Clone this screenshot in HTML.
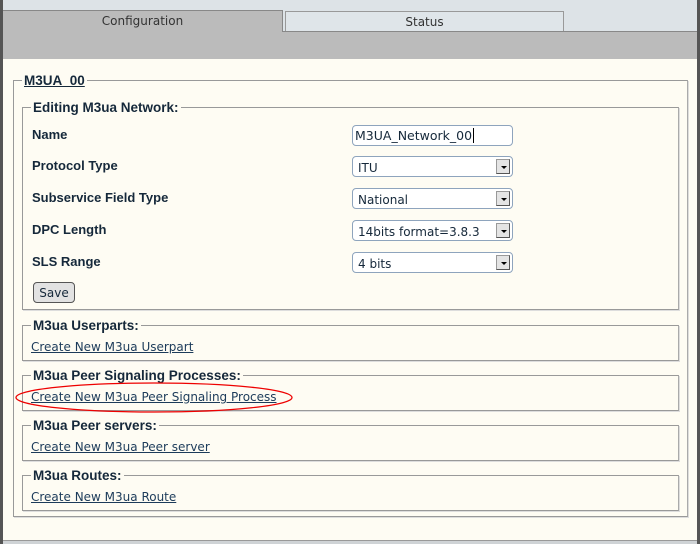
<!DOCTYPE html>
<html><head><style>
*{margin:0;padding:0;box-sizing:border-box}
body{width:700px;height:544px;background:#dde3e7;position:relative;overflow:hidden;font-family:"DejaVu Sans","Liberation Sans",sans-serif;color:#15283a}
.a{position:absolute}
.fs{position:absolute;border:1px solid #999;border-right-color:#aaa;box-shadow:1px 1px 0 #ddd}
.lg{position:absolute;background:#fefcf3;font-weight:bold;font-size:13.5px;padding:0 2px;line-height:15px;font-family:"Liberation Sans",sans-serif}
.lab{position:absolute;left:32px;font-weight:bold;font-size:13px;font-family:"Liberation Sans",sans-serif}
.sel{position:absolute;left:352px;width:161px;height:21px;border:1px solid #8ea4bd;border-radius:4px;background:#fff;font-size:12px;padding:4px 0 0 5px}
.sel i{position:absolute;right:2px;top:2px;width:14px;height:15px;background:#e4e4e4;border:1px solid #999;border-right-color:#555;border-bottom-color:#555}
.sel i:after{content:"";position:absolute;left:4px;top:6px;border-left:3px solid transparent;border-right:3px solid transparent;border-top:3px solid #000}
.lk{position:absolute;left:31px;font-size:12px;color:#1c3b5a;text-decoration:underline}
</style></head><body>
<div class="a" style="left:0;top:0;width:3px;height:544px;background:#555"></div>
<div class="a" style="left:697px;top:0;width:3px;height:544px;background:#555"></div>
<div class="a" style="left:3px;top:10px;width:280px;height:24px;background:#bbb;border-top:1px solid #888;border-right:1px solid #888;font-size:12px;text-align:center;padding-top:3px;color:#333">Configuration</div>
<div class="a" style="left:285px;top:11px;width:279px;height:21px;background:#dfe5e9;border:1px solid #999;font-size:12px;text-align:center;padding-top:3px;color:#333">Status</div>
<div class="a" style="left:283px;top:31px;width:414px;height:1px;background:#888"></div>
<div class="a" style="left:3px;top:32px;width:694px;height:27px;background:#bbb"></div>
<div class="a" style="left:3px;top:59px;width:694px;height:482px;background:#fefcf3"></div>
<div class="a" style="left:3px;top:540px;width:694px;height:4px;background:#cfd3d6;border-top:1px solid #999"></div>

<div class="fs" style="left:13px;top:80px;width:675px;height:437px"></div>
<div class="lg" style="left:22px;top:73px;text-decoration:underline">M3UA_00</div>

<div class="fs" style="left:22px;top:107px;width:657px;height:203px"></div>
<div class="lg" style="left:31px;top:100px">Editing M3ua Network:</div>
<div class="lab" style="top:127px">Name</div>
<div class="lab" style="top:158px">Protocol Type</div>
<div class="lab" style="top:190px">Subservice Field Type</div>
<div class="lab" style="top:222px">DPC Length</div>
<div class="lab" style="top:254px">SLS Range</div>
<div class="sel" style="top:125px;padding:2px 0 0 2px;font-size:12.5px">M3UA_Network_00<span style="border-left:1px solid #000;margin-left:1px"></span></div>
<div class="sel" style="top:156px">ITU<i></i></div>
<div class="sel" style="top:188px">National<i></i></div>
<div class="sel" style="top:220px">14bits format=3.8.3<i></i></div>
<div class="sel" style="top:252px">4 bits<i></i></div>
<div class="a" style="left:33px;top:282px;width:42px;height:21px;border:1px solid #555;border-radius:4px;background:#e2e2e2;font-size:12px;text-align:center;padding-top:3px">Save</div>

<div class="fs" style="left:22px;top:325px;width:657px;height:36px"></div>
<div class="lg" style="left:31px;top:318px">M3ua Userparts:</div>
<div class="lk" style="top:340px">Create New M3ua Userpart</div>

<div class="fs" style="left:22px;top:375px;width:657px;height:36px"></div>
<div class="lg" style="left:31px;top:368px">M3ua Peer Signaling Processes:</div>
<div class="lk" style="top:390px">Create New M3ua Peer Signaling Process</div>
<svg class="a" style="left:14px;top:380px" width="282" height="36"><ellipse cx="140" cy="17.5" rx="138" ry="14.5" fill="none" stroke="#e00" stroke-width="1.3"/></svg>

<div class="fs" style="left:22px;top:425px;width:657px;height:36px"></div>
<div class="lg" style="left:31px;top:418px">M3ua Peer servers:</div>
<div class="lk" style="top:440px">Create New M3ua Peer server</div>

<div class="fs" style="left:22px;top:475px;width:657px;height:36px"></div>
<div class="lg" style="left:31px;top:468px">M3ua Routes:</div>
<div class="lk" style="top:490px">Create New M3ua Route</div>
</body></html>
